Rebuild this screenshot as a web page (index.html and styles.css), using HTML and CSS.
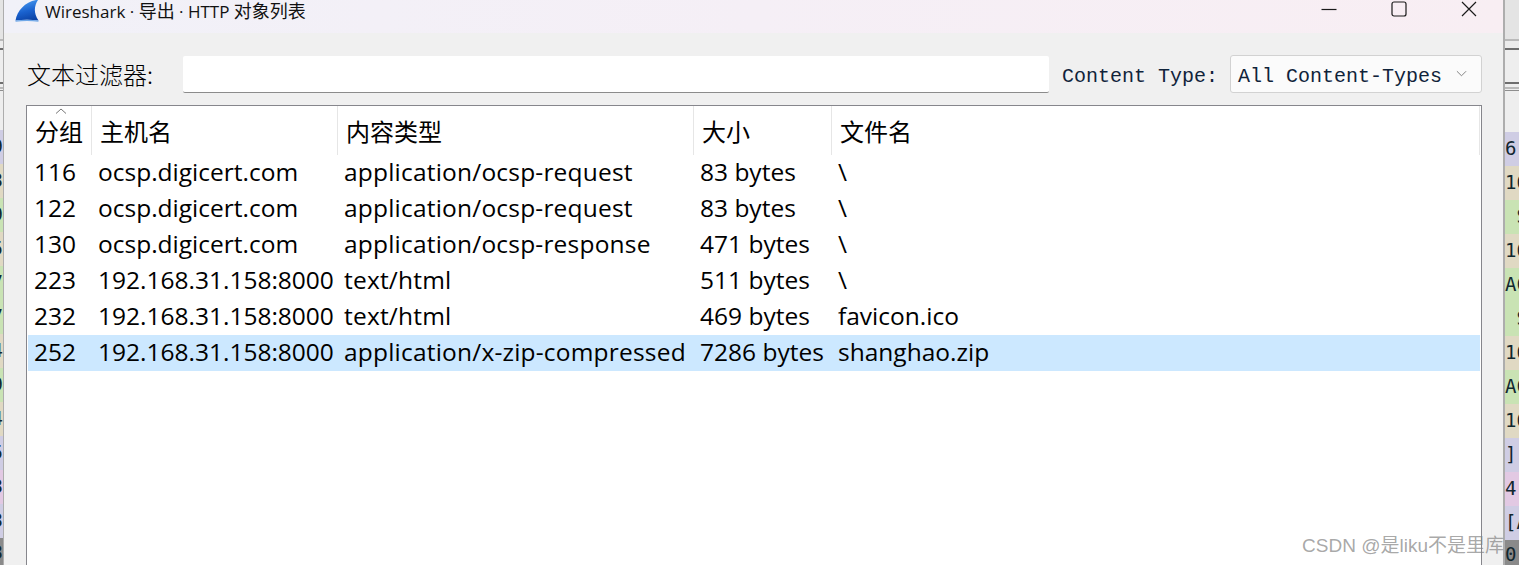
FILE: index.html
```html
<!DOCTYPE html>
<html lang="zh">
<head>
<meta charset="utf-8">
<title>Wireshark · 导出 · HTTP 对象列表</title>
<link rel="stylesheet" href="styles.css">
</head>
<body>
<div class="desktop">
  <aside class="strip strip-left">
    <div class="strip-top"></div>
    <div class="pk lav">9</div>
    <div class="pk tan">3</div>
    <div class="pk grn">9</div>
    <div class="pk tan">5</div>
    <div class="pk grn">7</div>
    <div class="pk grn">7</div>
    <div class="pk tan">4</div>
    <div class="pk grn">9</div>
    <div class="pk tan">4</div>
    <div class="pk lav">5</div>
    <div class="pk pnk">3</div>
    <div class="pk lav">3</div>
    <div class="pk dark">3</div>
  </aside>
  <main class="dialog">
    <header class="titlebar">
      <svg class="logo" viewBox="0 0 24 22" aria-hidden="true">
        <defs>
          <linearGradient id="fin" x1="0.3" y1="0" x2="0.6" y2="1">
            <stop offset="0" stop-color="#4a9cf0"/>
            <stop offset="0.55" stop-color="#1a62cf"/>
            <stop offset="1" stop-color="#0c43a6"/>
          </linearGradient>
        </defs>
        <path d="M0.5 20.5 C2 11 10 2 21 0 L23 0 C19 6 18.5 13 23.5 20.5 C16 19.5 8 19.5 0.5 20.5 Z" fill="url(#fin)"/>
        <path d="M0.5 21.2 C8 20 16 20 23.5 21.2" fill="none" stroke="#6fa8e8" stroke-width="1.2"/>
      </svg>
      <span class="title">Wireshark · <span class="cjk">导出</span> · HTTP <span class="cjk">对象列表</span></span>
      <div class="winbtns">
        <svg class="winbtn" viewBox="0 0 16 16"><path d="M0.5 8.5H15.5" /></svg>
        <svg class="winbtn" viewBox="0 0 16 16"><rect x="1" y="1" width="14" height="14" rx="2"/></svg>
        <svg class="winbtn" viewBox="0 0 16 16"><path d="M1 1L15 15M15 1L1 15"/></svg>
      </div>
    </header>
    <section class="toolbar">
      <label class="filter-label">文本过滤器:</label>
      <div class="filter-input"></div>
      <span class="type-label">Content Type:</span>
      <div class="combo">
        <span>All Content-Types</span>
        <svg class="chev" viewBox="0 0 12 7"><path d="M1 1L6 6L11 1"/></svg>
      </div>
    </section>
    <section class="list">
      <div class="row head">
        <div class="cell c1">分组<svg class="sort" viewBox="0 0 12 6"><path d="M1 5.5L6 1L11 5.5"/></svg></div>
        <div class="cell c2">主机名</div>
        <div class="cell c3">内容类型</div>
        <div class="cell c4">大小</div>
        <div class="cell c5">文件名</div>
      </div>
      <div class="row"><div class="cell c1">116</div><div class="cell c2">ocsp.digicert.com</div><div class="cell c3">application/ocsp-request</div><div class="cell c4">83 bytes</div><div class="cell c5">\</div></div>
      <div class="row"><div class="cell c1">122</div><div class="cell c2">ocsp.digicert.com</div><div class="cell c3">application/ocsp-request</div><div class="cell c4">83 bytes</div><div class="cell c5">\</div></div>
      <div class="row"><div class="cell c1">130</div><div class="cell c2">ocsp.digicert.com</div><div class="cell c3">application/ocsp-response</div><div class="cell c4">471 bytes</div><div class="cell c5">\</div></div>
      <div class="row"><div class="cell c1">223</div><div class="cell c2">192.168.31.158:8000</div><div class="cell c3">text/html</div><div class="cell c4">511 bytes</div><div class="cell c5">\</div></div>
      <div class="row"><div class="cell c1">232</div><div class="cell c2">192.168.31.158:8000</div><div class="cell c3">text/html</div><div class="cell c4">469 bytes</div><div class="cell c5">favicon.ico</div></div>
      <div class="row selected"><div class="cell c1">252</div><div class="cell c2">192.168.31.158:8000</div><div class="cell c3">application/x-zip-compressed</div><div class="cell c4">7286 bytes</div><div class="cell c5">shanghao.zip</div></div>
    </section>
  </main>
  <aside class="strip strip-right">
    <div class="strip-top"></div>
    <div class="pk lav">6</div>
    <div class="pk tan">16</div>
    <div class="pk grn">&nbsp;S</div>
    <div class="pk tan">16</div>
    <div class="pk grn">AC</div>
    <div class="pk grn">&nbsp;S</div>
    <div class="pk tan">16</div>
    <div class="pk grn">AC</div>
    <div class="pk tan">16</div>
    <div class="pk lav">]</div>
    <div class="pk pnk">4</div>
    <div class="pk lav">[A</div>
    <div class="pk dark">0</div>
  </aside>
</div>
<div class="watermark">CSDN @是liku不是里库</div>
</body>
</html>
```
FILE: styles.css
```css
* { box-sizing: border-box; }
html, body { margin: 0; padding: 0; height: 565px; overflow: hidden; }
body { background: #fff; font-family: "Noto Sans", "Noto Sans CJK SC", sans-serif; color: #000; }

.desktop { display: flex; height: 565px; }

.strip {
  flex: none;
  display: flex;
  flex-direction: column;
  overflow: hidden;
  font-family: "DejaVu Sans Mono", monospace;
  font-size: 19px;
  color: #12272f;
}
.strip-left { width: 3px; align-items: flex-end; }
.strip-right { width: 14px; }
.strip-top {
  height: 132px;
  width: 100%;
  flex: none;
  background:
    linear-gradient(#e4e4e4 0 39px, #b9b9b9 39px 41px, #ececec 41px 48px, #6e6e6e 48px 50px,
      #eeeeee 50px 82px, #6e6e6e 82px 84px, #eeeeee 84px 87px, #b9b9b9 87px 89px,
      #eeeeee 89px 90px, #8e8e8e 90px 91px, #eeeeee 91px);
}
.strip-left .strip-top { height: 130px; }
.pk { height: 34px; flex: none; line-height: 32px; white-space: pre; width: 100%; overflow: hidden; }
.strip-left .pk { display: flex; justify-content: flex-end; }
.lav { background: #cfcde4; }
.tan { background: #e0d9c3; }
.grn { background: #c9e3b4; }
.pnk { background: #e2c9e3; }
.dark { background: #8a8a8a; line-height: 28px; }

.dialog {
  flex: 1;
  min-width: 0;
  display: flex;
  flex-direction: column;
  background: #f0f0f0;
  border-left: 1px solid #adadad;
  border-right: 2px solid #adadad;
}

.titlebar {
  flex: none;
  height: 33px;
  display: flex;
  align-items: flex-start;
  padding-left: 11px;
  background: linear-gradient(90deg, #f1f1f8 0%, #f5eff6 50%, #f8eef3 100%);
}
.logo { width: 24px; height: 22px; flex: none; }
.title { margin-left: 6px; font-size: 17px; line-height: 20px; color: #111; white-space: nowrap; font-family: "Open Sans", "Noto Sans CJK SC", sans-serif; }
.cjk { font-size: 18px; font-family: "Noto Sans CJK SC", sans-serif; }
.winbtns { margin-left: auto; display: flex; align-items: center; gap: 54px; padding-right: 26px; padding-top: 1px; }
.winbtn { width: 16px; height: 16px; fill: none; stroke: #1a1a1a; stroke-width: 1.2; }

.toolbar {
  flex: none;
  height: 72px;
  display: flex;
  align-items: flex-start;
  padding: 23px 20px 0 23px;
}
.filter-label { width: 156px; font-size: 24px; line-height: 36px; font-weight: 300; font-family: "Noto Sans CJK SC", sans-serif; white-space: nowrap; }
.filter-input { width: 866px; height: 37px; background: #fff; border-bottom: 1px solid #8c8c8c; border-radius: 2px; }
.type-label { margin-left: 13px; width: 168px; font-family: "Liberation Mono", monospace; font-size: 20px; line-height: 42px; color: #10233a; white-space: pre; }
.combo {
  width: 252px;
  height: 38px;
  margin-top: -1px;
  display: flex;
  align-items: center;
  padding: 4px 14px 0 7px;
  background: #fbfbfb;
  border: 1px solid #d2d2d2;
  border-radius: 3px;
  font-family: "Liberation Mono", monospace;
  font-size: 20px;
  color: #10233a;
  white-space: pre;
}
.chev { width: 11px; height: 7px; margin-left: auto; margin-bottom: 6px; fill: none; stroke: #777; stroke-width: 1; }

.list {
  flex: 1;
  margin: 0 21px 0 22px;
  background: #fff;
  border: 1px solid #86868c;
  border-bottom: 0;
  padding-left: 1px;
  padding-right: 1px;
}
.row {
  display: grid;
  grid-template-columns: 64px 246px 356px 138px 1fr;
  height: 36px;
  align-items: center;
  font-size: 24.5px;
  line-height: 34px;
  white-space: nowrap;
  font-family: "Open Sans", "Noto Sans CJK SC", sans-serif;
}
.row .cell { padding-left: 6px; padding-bottom: 2px; overflow: visible; }
.row .c3 { letter-spacing: 0.2px; }
.head { height: 49px; }
.head .cell { position: relative; height: 49px; font-size: 24px; letter-spacing: 0; line-height: 49px; padding-left: 8px; padding-bottom: 0; border-right: 1px solid #e6e6e6; font-family: "Noto Sans CJK SC", sans-serif; }
.head .c1 { padding-left: 7px; }
.selected { background: #cce8ff; }
.sort { position: absolute; left: 27px; top: 2px; width: 12px; height: 6px; fill: none; stroke: #777; stroke-width: 1; }

.watermark {
  position: absolute;
  right: 15px;
  bottom: 7px;
  font-family: "Liberation Sans", "Noto Sans CJK SC", sans-serif;
  font-size: 19px;
  line-height: 24px;
  color: rgba(130, 130, 130, 0.7);
  white-space: nowrap;
}
```
